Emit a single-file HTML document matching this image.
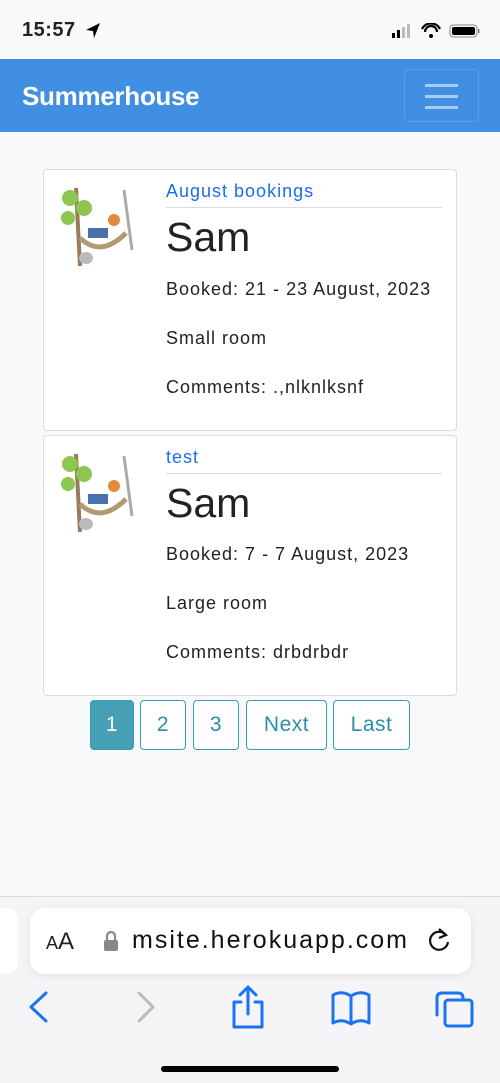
<!DOCTYPE html>
<html><head><meta charset="utf-8"><style>
*{box-sizing:border-box;margin:0;padding:0}
body{width:500px;height:1083px;background:#f8f9fb;font-family:"Liberation Sans",sans-serif;position:relative;overflow:hidden;color:#222}
.abs{position:absolute}
.nav{left:0;top:59px;width:500px;height:73px;background:#418fe2}
.card{position:absolute;left:43px;width:414px;background:#fff;border:1.5px solid #dcdcdc;border-radius:4px}
.t{position:absolute;left:122px;font-size:18px;letter-spacing:1px;white-space:nowrap}
.pg{position:absolute;top:700px;height:50px;border:1.5px solid #3a9cb2;border-radius:4px;color:#2a8fa6;font-size:21px;letter-spacing:0.5px;display:flex;align-items:center;justify-content:center;background:#fff}
</style></head><body>
<div class="abs" style="left:22px;top:19px;font-size:20px;font-weight:bold;letter-spacing:0.5px">15:57</div>
<svg class="abs" style="left:84px;top:22px" width="18" height="18" viewBox="0 0 18 18"><path d="M16 1 L2 8 L9 9 L10 16 Z" fill="#000"/></svg>
<svg class="abs" style="left:392px;top:23px" width="90" height="16"><rect x="0" y="10" width="3" height="5" fill="#000"/><rect x="5" y="7" width="3" height="8" fill="#000"/><rect x="10" y="4" width="3" height="11" fill="#bbb"/><rect x="15" y="1" width="3" height="14" fill="#bbb"/>
<path d="M30 6 A10 10 0 0 1 48 6 M33 9 A6 6 0 0 1 45 9" stroke="#000" stroke-width="2.2" fill="none"/><circle cx="39" cy="13" r="2" fill="#000"/>
<rect x="58" y="2" width="27" height="12" rx="3.5" fill="none" stroke="#888" stroke-width="1"/><rect x="60" y="4" width="23" height="8" rx="2" fill="#000"/><rect x="86" y="6" width="1.5" height="4" fill="#888"/></svg>
<div class="abs nav"></div>
<div class="abs" style="left:22px;top:81px;font-size:26px;color:#fff;font-weight:bold;letter-spacing:-0.3px">Summerhouse</div>
<div class="abs" style="left:404px;top:69px;width:75px;height:53px;border:1px solid rgba(255,255,255,.15);border-radius:5px"></div>
<div class="abs" style="left:425px;top:84px;width:33px;height:2.5px;background:#a9cdf2;box-shadow:0 11px 0 #a9cdf2,0 22px 0 #a9cdf2"></div>

<div class="card" style="top:169px;height:262px">
 <svg class="abs" style="left:12px;top:8px" width="80" height="88" viewBox="0 0 80 88"><path d="M20 10 L24 88" stroke="#9a7a5a" stroke-width="4"/><circle cx="14" cy="20" r="8" fill="#8cc850"/><circle cx="28" cy="30" r="8" fill="#8cc850"/><circle cx="12" cy="40" r="7" fill="#8cc850"/><path d="M68 12 L76 72" stroke="#aaa" stroke-width="3"/><path d="M24 60 Q45 80 70 55" stroke="#b09a70" stroke-width="5" fill="none"/><circle cx="58" cy="42" r="6" fill="#e08a3a"/><rect x="32" y="50" width="20" height="10" fill="#4a70b0"/><ellipse cx="30" cy="80" rx="7" ry="6" fill="#bbb"/></svg>
 <div class="t" style="top:11px;color:#1a6ef0">August bookings</div>
 <div class="abs" style="left:122px;top:37px;width:276px;height:1px;background:#ddd"></div>
 <div class="t" style="top:44px;font-size:41px;letter-spacing:0">Sam</div>
 <div class="t" style="top:109px">Booked: 21 - 23 August, 2023</div>
 <div class="t" style="top:158px">Small room</div>
 <div class="t" style="top:207px">Comments: .,nlknlksnf</div>
</div>
<div class="card" style="top:435px;height:261px">
 <svg class="abs" style="left:12px;top:8px" width="80" height="88" viewBox="0 0 80 88"><path d="M20 10 L24 88" stroke="#9a7a5a" stroke-width="4"/><circle cx="14" cy="20" r="8" fill="#8cc850"/><circle cx="28" cy="30" r="8" fill="#8cc850"/><circle cx="12" cy="40" r="7" fill="#8cc850"/><path d="M68 12 L76 72" stroke="#aaa" stroke-width="3"/><path d="M24 60 Q45 80 70 55" stroke="#b09a70" stroke-width="5" fill="none"/><circle cx="58" cy="42" r="6" fill="#e08a3a"/><rect x="32" y="50" width="20" height="10" fill="#4a70b0"/><ellipse cx="30" cy="80" rx="7" ry="6" fill="#bbb"/></svg>
 <div class="t" style="top:11px;color:#1a6ef0">test</div>
 <div class="abs" style="left:122px;top:37px;width:276px;height:1px;background:#ddd"></div>
 <div class="t" style="top:44px;font-size:41px;letter-spacing:0">Sam</div>
 <div class="t" style="top:108px">Booked: 7 - 7 August, 2023</div>
 <div class="t" style="top:157px">Large room</div>
 <div class="t" style="top:206px">Comments: drbdrbdr</div>
</div>
<div class="pg" style="left:90px;width:44px;background:#45a0b6;color:#fff">1</div>
<div class="pg" style="left:140px;width:46px">2</div>
<div class="pg" style="left:193px;width:46px">3</div>
<div class="pg" style="left:246px;width:81px">Next</div>
<div class="pg" style="left:333px;width:77px">Last</div>

<div class="abs" style="left:0;top:896px;width:500px;height:187px;background:#f5f5f7;border-top:1px solid #ddd"></div>
<div class="abs" style="left:-20px;top:908px;width:38px;height:66px;background:#fff;border-radius:12px"></div>
<div class="abs" style="left:30px;top:908px;width:441px;height:66px;background:#fff;border-radius:14px;box-shadow:0 2px 10px rgba(0,0,0,.08)"></div>
<div class="abs" style="left:46px;top:928px;font-size:24px"><span style="font-size:18px">A</span>A</div>
<svg class="abs" style="left:103px;top:930px" width="16" height="22"><path d="M4 10 V6 a4 4 0 0 1 8 0 V10" stroke="#888" stroke-width="2.2" fill="none"/><rect x="1" y="10" width="14" height="11" rx="2" fill="#888"/></svg>
<div class="abs" style="left:132px;top:926px;font-size:25px;letter-spacing:2px;color:#111">msite.herokuapp.com</div>
<svg class="abs" style="left:425px;top:926px" width="28" height="30"><path d="M21 9 A9 9 0 1 0 23 16" stroke="#111" stroke-width="2.2" fill="none"/><path d="M14 3 L21 9 L14 12" stroke="#111" stroke-width="2.2" fill="none"/></svg>
<svg class="abs" style="left:0;top:985px" width="500" height="45" fill="none" stroke-width="3" stroke-linecap="round" stroke-linejoin="round">
<path d="M46 8 L31 22 L46 36" stroke="#1a73f0"/><path d="M139 8 L153 22 L139 36" stroke="#bbb"/>
<path d="M241 17 H234 V42 H262 V17 H255 M248 29 V3 M240 10 L248 2 L256 10" stroke="#1a73f0"/>
<path d="M333 10 Q342 5 351 11 Q360 5 369 10 V38 Q360 33 351 39 Q342 33 333 38 Z M351 11 V39" stroke="#1a73f0"/>
<rect x="445" y="15" width="27" height="26" rx="3" stroke="#1a73f0"/><path d="M437 30 V13 Q437 8 442 8 H458 Q463 8 463 13" stroke="#1a73f0"/>
</svg>
<div class="abs" style="left:161px;top:1066px;width:178px;height:6px;border-radius:3px;background:#000"></div>
</body></html>
